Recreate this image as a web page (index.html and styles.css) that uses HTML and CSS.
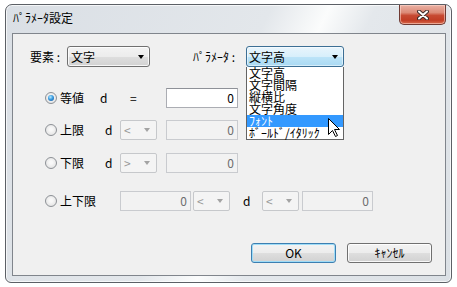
FILE: index.html
```html
<!DOCTYPE html>
<html lang="ja">
<head>
<meta charset="utf-8">
<title>ﾊﾟﾗﾒｰﾀ設定</title>
<link rel="stylesheet" href="styles.css">
</head>
<body>
<div class="window">
  <div class="titlebar">
    <span class="title">ﾊﾟﾗﾒｰﾀ設定</span>
    <div class="close">
      <svg width="12" height="10" viewBox="0 0 12 10">
        <path d="M2 1.5 L10 8.5 M10 1.5 L2 8.5" stroke="#3b2a28" stroke-width="4" stroke-linecap="round"/>
        <path d="M2 1.5 L10 8.5 M10 1.5 L2 8.5" stroke="#ffffff" stroke-width="2" stroke-linecap="round"/>
      </svg>
    </div>
  </div>
  <div class="client">
    <div class="row-top">
      <span class="lbl-elem">要素 :</span>
      <div class="combo combo-elem"><span class="combo-text">文字</span><span class="arrow"></span></div>
      <span class="lbl-param">ﾊﾟﾗﾒｰﾀ :</span>
      <div class="combo-wrap">
        <div class="combo combo-open"><span class="combo-text">文字高</span><span class="arrow"></span></div>
        <ul class="droplist">
          <li>文字高</li>
          <li>文字間隔</li>
          <li>縦横比</li>
          <li>文字角度</li>
          <li class="sel">ﾌｫﾝﾄ</li>
          <li>ﾎﾞｰﾙﾄﾞ/ｲﾀﾘｯｸ</li>
        </ul>
      </div>
    </div>

    <div class="opt-row row1">
      <span class="radio checked"></span>
      <span class="opt-name w40">等値</span>
      <span class="sym w30">d</span>
      <span class="sym w36">=</span>
      <div class="field">0</div>
    </div>

    <div class="opt-row row2">
      <span class="radio"></span>
      <span class="opt-name w45">上限</span>
      <span class="sym w15">d</span>
      <div class="combo small disabled"><span class="combo-text">&lt;</span><span class="arrow"></span></div>
      <div class="field disabled gap9">0</div>
    </div>

    <div class="opt-row row3">
      <span class="radio"></span>
      <span class="opt-name w45">下限</span>
      <span class="sym w15">d</span>
      <div class="combo small disabled"><span class="combo-text">&gt;</span><span class="arrow"></span></div>
      <div class="field disabled gap9">0</div>
    </div>

    <div class="opt-row row4">
      <span class="radio"></span>
      <span class="opt-name w60">上下限</span>
      <div class="field disabled narrow">0</div>
      <div class="combo small disabled gap2"><span class="combo-text">&lt;</span><span class="arrow"></span></div>
      <span class="sym w32">d</span>
      <div class="combo small disabled"><span class="combo-text">&lt;</span><span class="arrow"></span></div>
      <div class="field disabled narrow gap3">0</div>
    </div>

    <div class="buttons">
      <button class="btn default">OK</button>
      <button class="btn">ｷｬﾝｾﾙ</button>
    </div>
  </div>
</div>
<svg class="cursor" width="13" height="20" viewBox="0 0 13 20">
  <path d="M0.5 0.5 L0.5 16.5 L4.5 12.5 L7.5 18.5 L9.5 17.5 L6.5 11.5 L11.5 11.5 Z" fill="#fff" stroke="#000" stroke-width="1" stroke-linejoin="miter"/>
</svg>
</body>
</html>
```

FILE: styles.css
```css
* { box-sizing: border-box; }

html, body {
  margin: 0;
  padding: 0;
}

body {
  position: relative;
  width: 457px;
  height: 287px;
  overflow: hidden;
  background: #ffffff;
  font-family: "Noto Sans CJK JP", "Noto Sans", sans-serif;
  font-size: 12px;
  color: #000;
}

.window {
  margin: 4px 0 0 5px;
  width: 447px;
  height: 279px;
  border: 1px solid #5c6066;
  border-radius: 7px 7px 6px 6px;
  padding: 0 5px 6px 6px;
  display: flex;
  flex-direction: column;
  background: linear-gradient(116deg, #dadfe5 0%, #e3e7eb 46%, #fbfcfc 56%, #e4e8ec 64%, #dbe0e5 100%);
  box-shadow: inset 0 0 0 1px rgba(255,255,255,0.7);
}

.titlebar {
  height: 28px;
  display: flex;
  align-items: flex-start;
  flex-shrink: 0;
}

.title {
  margin: 5px 0 0 1px;
  line-height: 16px;
  font-size: 12px;
}

.close {
  margin-left: auto;
  width: 47px;
  height: 20px;
  border: 1px solid #6f3a33;
  border-top: none;
  border-radius: 0 0 5px 5px;
  background: linear-gradient(#eab1a4 0%, #dc8a77 40%, #c74a33 55%, #c13d25 80%, #d86a4c 100%);
  box-shadow: inset 0 0 0 1px rgba(255,220,210,0.55);
  display: flex;
  align-items: center;
  justify-content: center;
}

.client {
  flex: 1;
  border: 1px solid #80858c;
  background: #f0f0f0;
  padding: 12px 13px 12px 17px;
  display: flex;
  flex-direction: column;
}

.row-top {
  display: flex;
  align-items: center;
  height: 21px;
}

.lbl-elem { width: 37px; line-height: 16px; }
.lbl-param { margin-left: 43px; width: 53px; line-height: 16px; }

.combo {
  height: 21px;
  display: flex;
  align-items: center;
  border: 1px solid #707070;
  border-radius: 3px;
  background: linear-gradient(#f3f3f3, #ececec 50%, #dedede 51%, #d2d2d2);
  box-shadow: inset 0 0 0 1px rgba(255,255,255,0.8);
  padding: 0 5px 0 3px;
  line-height: 16px;
}

.combo-text { flex: 1; white-space: nowrap; }

.arrow {
  width: 0;
  height: 0;
  border-left: 3.5px solid transparent;
  border-right: 3.5px solid transparent;
  border-top: 4px solid #000;
}

.combo-elem { width: 83px; }

.combo-wrap {
  position: relative;
  width: 98px;
}

.combo-open {
  width: 98px;
  border-color: #3c6f95;
  background: linear-gradient(#e9f5fc, #d8effb 50%, #bde4f8 51%, #a9d9f3);
  box-shadow: inset 0 0 0 1px rgba(255,255,255,0.5);
  padding-left: 2px;
}

.droplist {
  position: absolute;
  top: 21px;
  left: 0;
  width: 98px;
  margin: 0;
  padding: 0;
  list-style: none;
  background: #fff;
  border: 1px solid #646464;
  border-top: none;
  z-index: 5;
}

.droplist li {
  height: 12px;
  line-height: 12px;
  padding-left: 2px;
  white-space: nowrap;
}

.droplist li.sel {
  background: #3399ff;
  color: #fff;
}

.opt-row {
  display: flex;
  align-items: center;
  height: 21px;
  line-height: 16px;
}

.row1 { margin-top: 20px; }
.row2 { margin-top: 11px; }
.row3 { margin-top: 12px; }
.row4 { margin-top: 17px; }

.radio {
  position: relative;
  margin-left: 15px;
  margin-right: 3px;
  width: 12px;
  height: 12px;
  border-radius: 50%;
  border: 1px solid #8d9196;
  background: radial-gradient(circle at 50% 45%, #f8f8f8 20%, #dcdcdc 100%);
  flex-shrink: 0;
}

.radio.checked::after {
  content: "";
  position: absolute;
  left: 2px;
  top: 2px;
  width: 6px;
  height: 6px;
  border-radius: 50%;
  background: radial-gradient(circle at 40% 35%, #b8ecff 0%, #3a9be0 45%, #124d93 100%);
}

.opt-name { white-space: nowrap; }
.w40 { width: 40px; }
.w45 { width: 45px; }
.w60 { width: 60px; }

.sym { white-space: nowrap; }
.w30 { width: 30px; }
.w36 { width: 36px; }
.w15 { width: 15px; }
.w32 { width: 32px; padding-left: 13px; }

.field {
  width: 72px;
  height: 20px;
  border: 1px solid #abadb3;
  border-top-color: #8e9198;
  background: #fff;
  text-align: right;
  padding-right: 3px;
  line-height: 18px;
}

.field.disabled {
  border-color: #c9cbcf;
  background: #f2f2f2;
  color: #6d6d6d;
}

.field.narrow { width: 71px; }

.gap9 { margin-left: 9px; }
.gap2 { margin-left: 2px; }
.gap3 { margin-left: 3px; }

.combo.small {
  width: 37px;
  height: 20px;
  padding: 0 6px 0 3px;
}

.combo.disabled {
  border-color: #c6c8cb;
  border-radius: 2px;
  background: #f4f4f4;
  box-shadow: none;
  color: #9a9a9a;
}

.combo.disabled .arrow { border-top-color: #a3a3a3; }

.buttons {
  margin-top: auto;
  display: flex;
  justify-content: flex-end;
  gap: 11px;
}

.btn {
  width: 85px;
  height: 20px;
  padding: 0;
  border: 1px solid #707070;
  border-radius: 3px;
  background: linear-gradient(#f3f3f3, #ececec 50%, #dedede 51%, #d1d1d1);
  box-shadow: inset 0 0 0 1px rgba(255,255,255,0.85);
  font-family: "Noto Sans CJK JP", "Noto Sans", sans-serif;
  font-size: 12px;
  line-height: 16px;
  color: #000;
}

.btn.default {
  border-color: #3c7fb1;
  box-shadow: inset 0 0 0 1px #9fdcf7;
}

.cursor {
  position: absolute;
  left: 328px;
  top: 118px;
  z-index: 10;
}
```
